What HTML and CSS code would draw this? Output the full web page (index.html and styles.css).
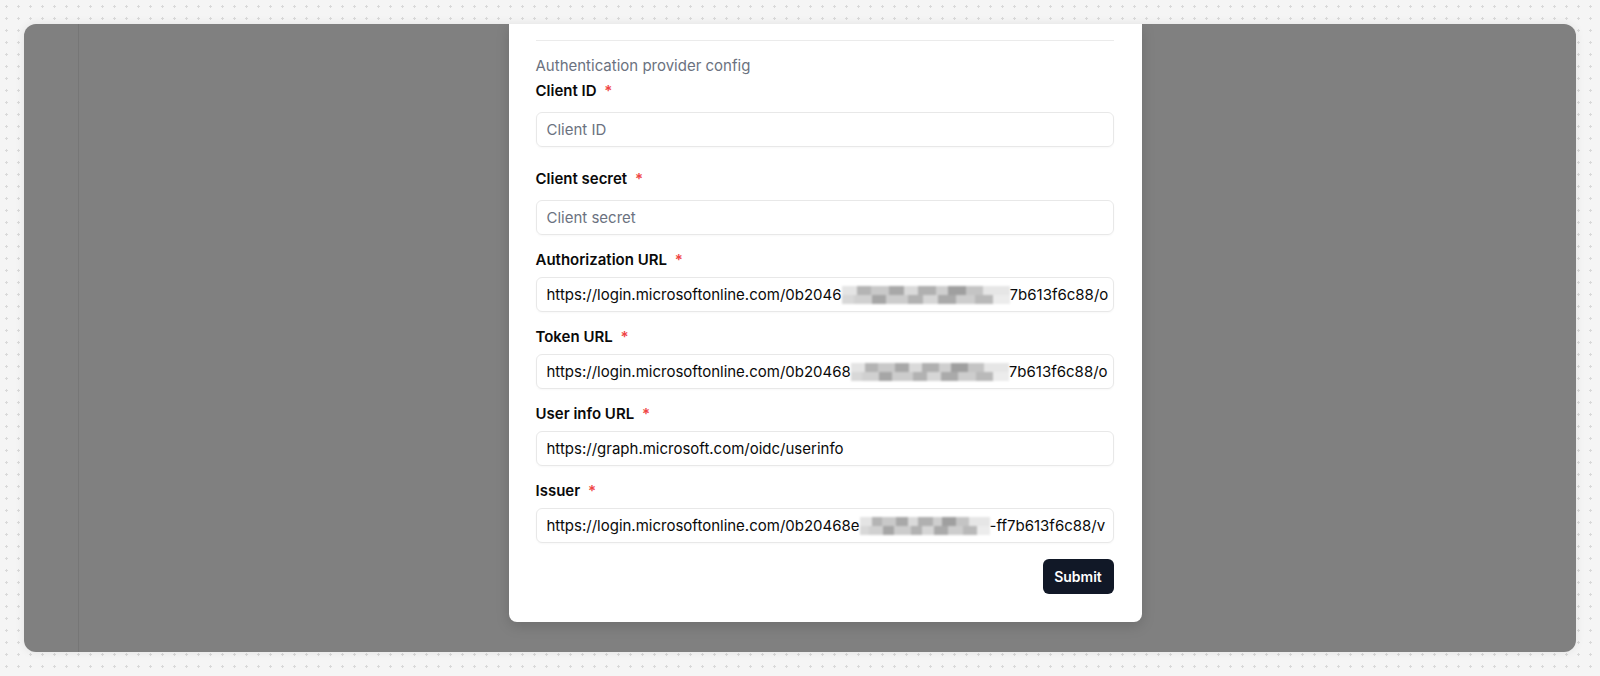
FILE: index.html
```html
<!DOCTYPE html>
<html lang="en">

<head>
    <meta charset="UTF-8">
    <title>Authentication provider</title>
    <link rel="stylesheet" href="styles.css">
</head>

<body>

    <div class="frame">
        <!-- app underneath the overlay -->
        <div class="sidebar"></div>

        <div class="main">
            <div class="modal">
                <hr class="divider">

                <div class="section-title">Authentication provider config</div>

                <div class="field field-loose field-first">
                    <label class="label">Client ID <span class="req">*</span></label>
                    <div class="input placeholder">Client ID</div>
                </div>

                <div class="field field-loose">
                    <label class="label">Client secret <span class="req">*</span></label>
                    <div class="input placeholder">Client secret</div>
                </div>

                <div class="field">
                    <label class="label">Authorization URL <span class="req">*</span></label>
                    <div class="input">https://login.microsoftonline.com/0b2046<span class="redacted r-auth"></span>7b613f6c88/o</div>
                </div>

                <div class="field">
                    <label class="label">Token URL <span class="req">*</span></label>
                    <div class="input">https://login.microsoftonline.com/0b20468<span class="redacted r-token"></span>7b613f6c88/o</div>
                </div>

                <div class="field">
                    <label class="label">User info URL <span class="req">*</span></label>
                    <div class="input">https://graph.microsoft.com/oidc/userinfo</div>
                </div>

                <div class="field">
                    <label class="label">Issuer <span class="req">*</span></label>
                    <div class="input">https://login.microsoftonline.com/0b20468e<span class="redacted r-issuer"></span>-ff7b613f6c88/v</div>
                </div>

                <div class="actions">
                    <button class="btn-submit">Submit</button>
                </div>
            </div>
        </div>
    </div>

</body>

</html>
```

FILE: styles.css
```css
* {
    box-sizing: border-box;
}

html,
body {
    height: 100%;
}

body {
    margin: 0;
    padding: 24px;
    font-family: Inter, "Noto Sans", sans-serif;
    color: #0a0a0a;
    background: #f5f5f5 url("data:image/svg+xml,%3Csvg xmlns='http://www.w3.org/2000/svg' width='12' height='12'%3E%3Crect x='5' y='6' width='3' height='1' fill='%23d9d9d9'/%3E%3Crect x='6' y='5' width='1' height='3' fill='%23d9d9d9'/%3E%3C/svg%3E");
}

.frame {
    height: 100%;
    display: flex;
    background: #808080;
    border-radius: 12px;
    overflow: hidden;
    box-shadow: 0 0 10px rgba(0, 0, 0, 0.08);
}

.sidebar {
    width: 55px;
    flex-shrink: 0;
    border-right: 1px solid #767676;
}

.main {
    flex: 1;
    display: flex;
    justify-content: center;
    align-items: flex-start;
    padding-right: 5px;
}

.modal {
    width: 633px;
    background: white;
    border-radius: 0 0 8px 8px;
    padding: 16px 28px 28px 27px;
    box-shadow: 0 4px 14px rgba(0, 0, 0, 0.15);
}

.divider {
    margin: 0;
    border: none;
    border-top: 1px solid #ebebeb;
}

.section-title {
    margin-top: 15px;
    font-size: 15px;
    line-height: 20px;
    color: #6b7280;
}

.field {
    display: flex;
    flex-direction: column;
    gap: 7px;
    margin-top: 15px;
}

.field-loose {
    gap: 11px;
}

.field-first {
    margin-top: 5px;
    margin-bottom: 22px;
}

.label {
    font-size: 15px;
    line-height: 20px;
    font-weight: 600;
}

.req {
    color: #ef4444;
    margin-left: 4px;
}

.input {
    height: 35px;
    padding: 0 10px;
    border: 1px solid #e8e8e8;
    border-radius: 6px;
    font-size: 15px;
    line-height: 33px;
    white-space: nowrap;
    overflow: hidden;
    box-shadow: 0 1px 2px rgba(0, 0, 0, 0.03);
}

.placeholder {
    color: #6b7280;
}

.redacted {
    display: inline-block;
    height: 18px;
    vertical-align: -4px;
    filter: blur(1px);
    background:
        linear-gradient(90deg, #e4e4e4 0 9%, #b4b4b4 9% 17%, #c9c9c9 17% 28%, #a8a8a8 28% 37%, #dadada 37% 45%, #b0b0b0 45% 56%, #cfcfcf 56% 63%, #9f9f9f 63% 74%, #c4c4c4 74% 84%, #e6e6e6 84% 100%) top / 100% 50% no-repeat,
        linear-gradient(90deg, #d8d8d8 0 7%, #d0d0d0 7% 18%, #a6a6a6 18% 26%, #cccccc 26% 39%, #b2b2b2 39% 48%, #d6d6d6 48% 57%, #aaaaaa 57% 68%, #cdcdcd 68% 79%, #b9b9b9 79% 90%, #ececec 90% 100%) bottom / 100% 50% no-repeat;
}

.r-auth {
    width: 168px;
}

.r-token {
    width: 158px;
}

.r-issuer {
    width: 130px;
}

.actions {
    display: flex;
    justify-content: flex-end;
    margin-top: 16px;
}

.btn-submit {
    width: 71px;
    height: 35px;
    border: none;
    border-radius: 6px;
    background: #111827;
    color: white;
    font-family: inherit;
    font-size: 14px;
    font-weight: 600;
    cursor: pointer;
}
```
